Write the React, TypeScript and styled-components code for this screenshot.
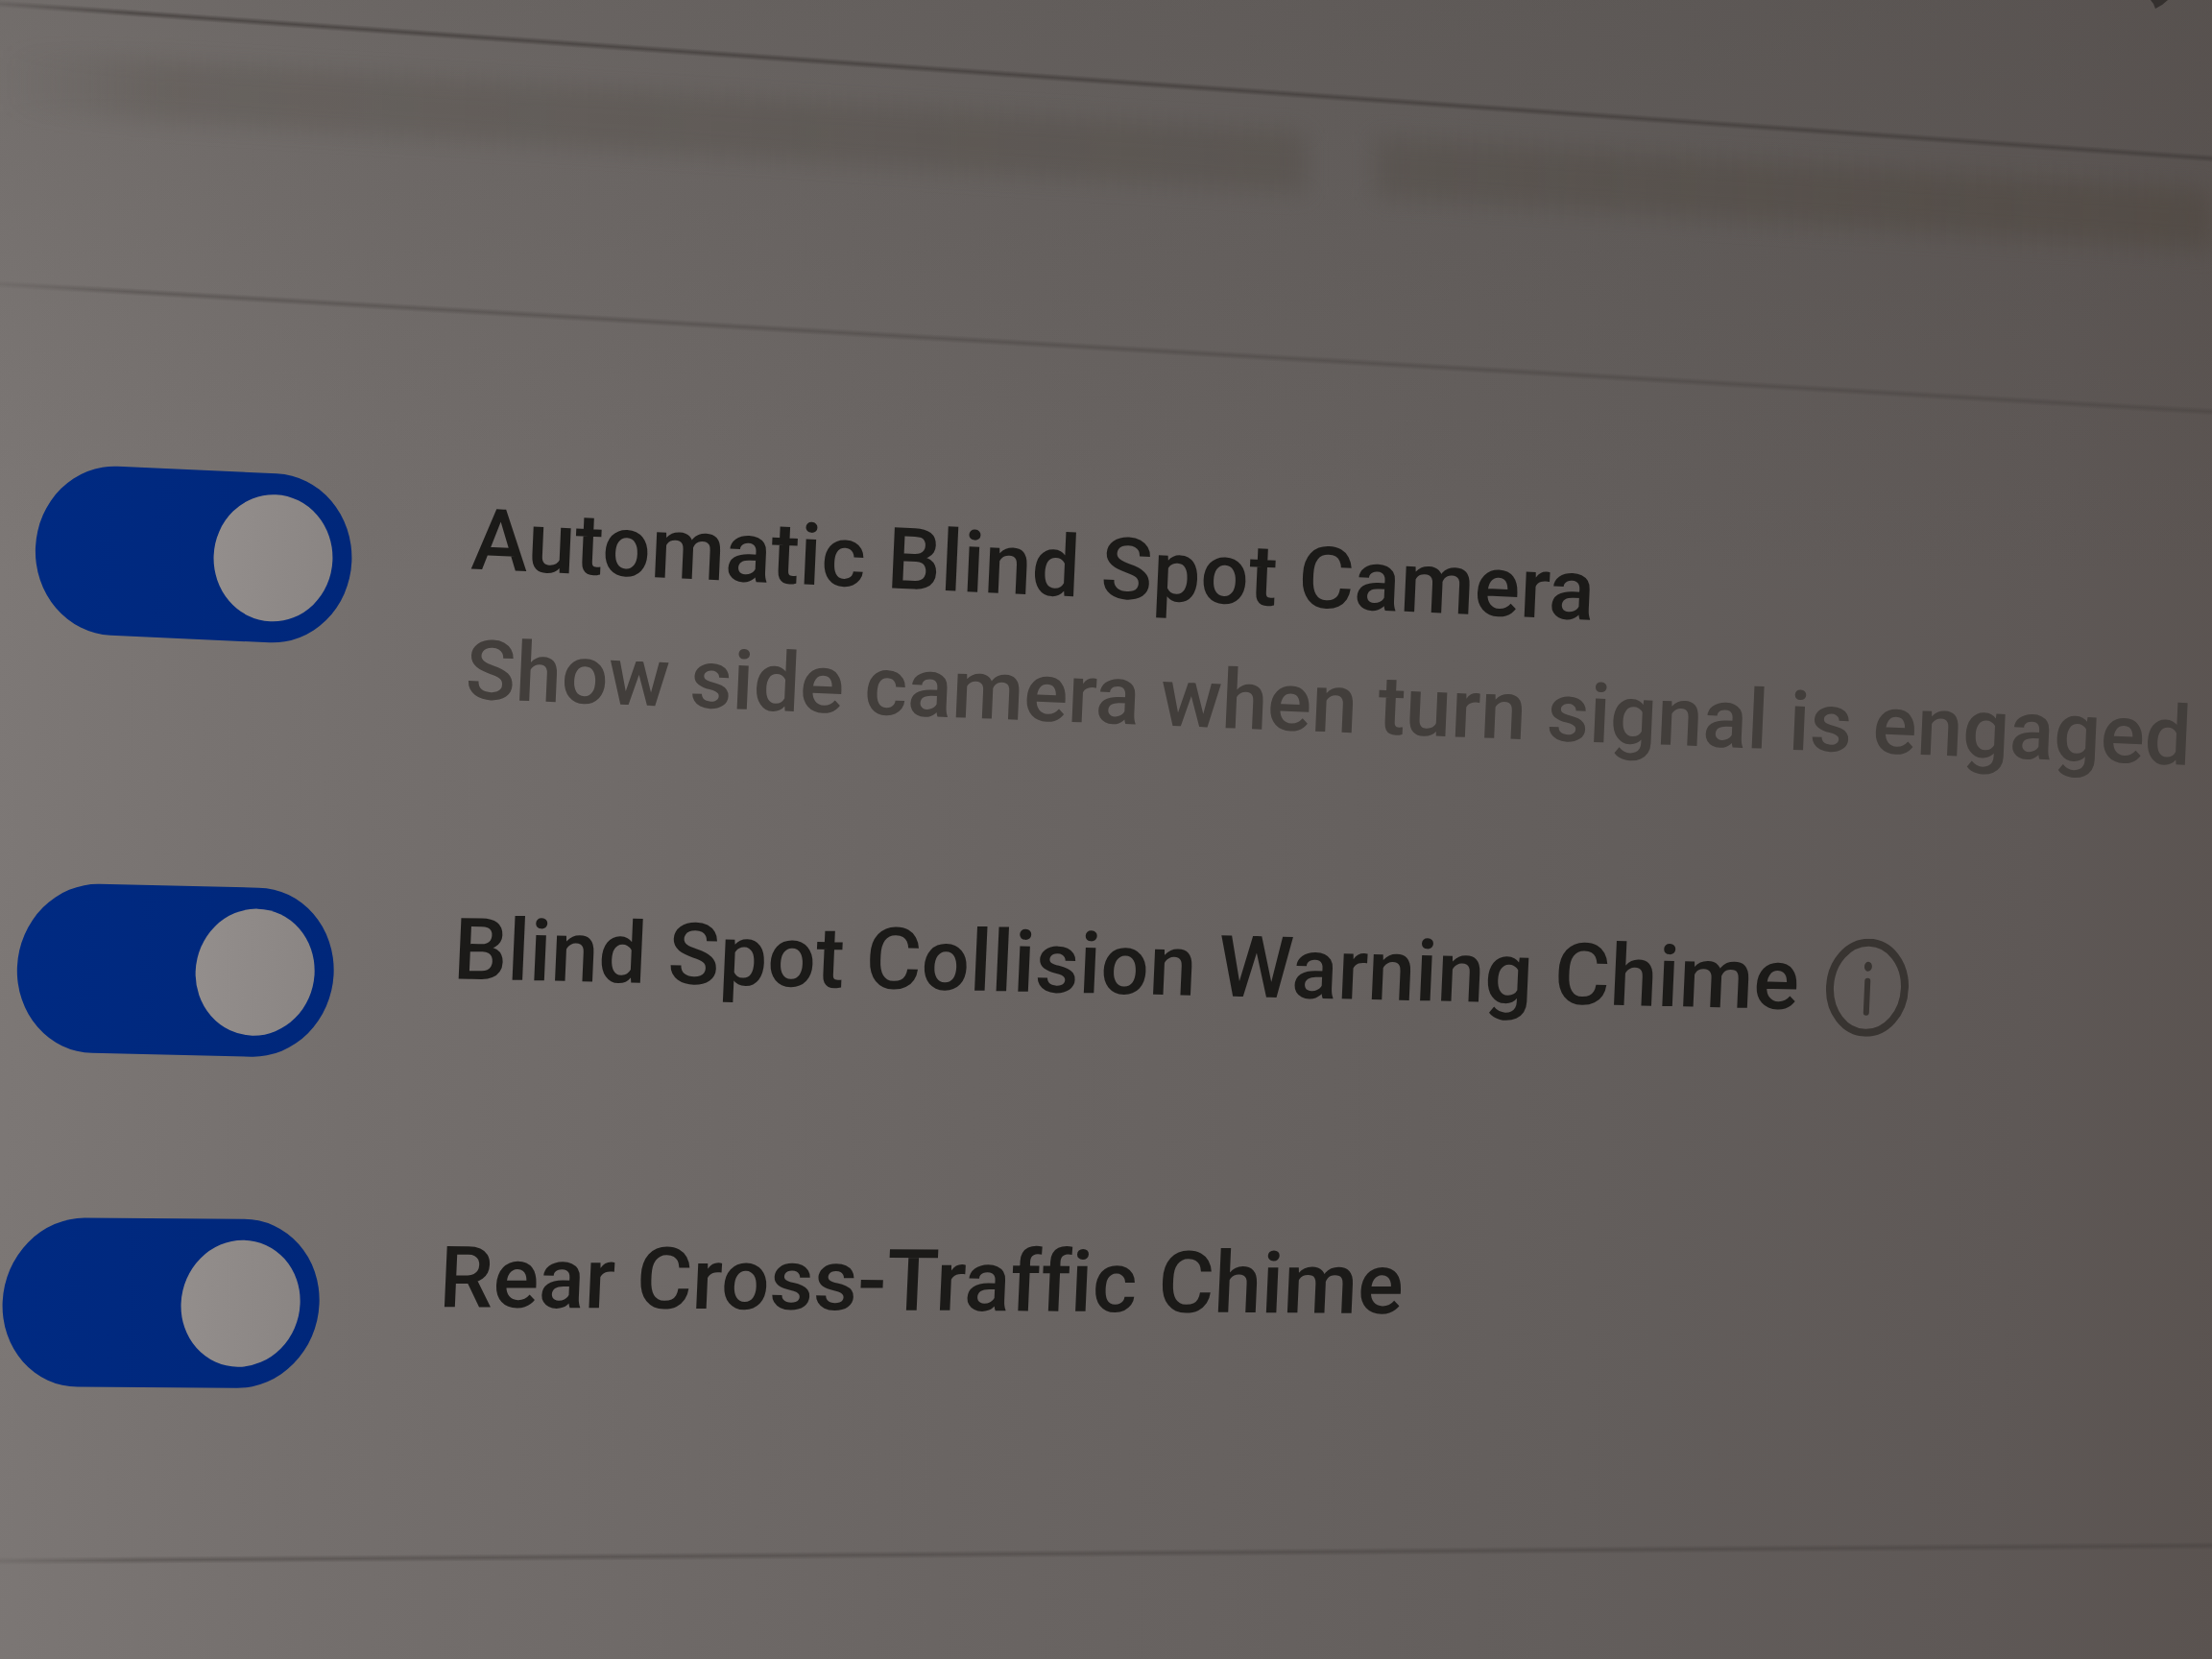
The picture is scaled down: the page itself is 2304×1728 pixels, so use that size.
import React, { useState } from "react";
import styled, { createGlobalStyle } from "styled-components";

const GlobalStyle = createGlobalStyle`
  *, *::before, *::after { box-sizing: border-box; }
  html { background: #625d5b; }
  body {
    margin: 0;
    font-family: Roboto, "Liberation Sans", sans-serif;
    font-variant-ligatures: none;
    color: #1b1a18;
  }
`;

const Screen = styled.main`
  position: relative;
  display: flex;
  flex-direction: column;
  min-height: 100vh;
  overflow: hidden;
  background:
    linear-gradient(180deg, rgba(70, 66, 63, 0.22) 0%, rgba(70, 66, 63, 0) 35%),
    linear-gradient(94deg, #7e7977 0%, #746f6d 18%, #6a6563 45%, #635e5c 72%, #5e5856 90%, #5a5350 100%);
`;

const EdgeMark = styled.svg`
  position: absolute;
  top: 0;
  right: 44px;
  color: #34302e;
`;

const Divider = styled.hr<{ $tilt: number; $strength: number }>`
  width: 100%;
  height: 8px;
  margin: 0;
  border: 0;
  flex: none;
  background: linear-gradient(
    180deg,
    rgba(66, 61, 59, 0),
    rgba(66, 61, 59, ${(p) => p.$strength}) 50%,
    rgba(66, 61, 59, 0)
  );
  mask-image: linear-gradient(90deg, rgba(0, 0, 0, 0.3), #000 6%);
  transform: skewY(${(p) => p.$tilt}deg);
  transform-origin: 0 50%;
`;

const Band = styled.div`
  display: flex;
  gap: 72px;
  height: 64px;
  margin: 44px 0 176px;
  transform: skewY(3.6deg);
  transform-origin: 0 50%;
`;

const BandPart = styled.div<{ $grow: number; $fade?: boolean }>`
  flex: ${(p) => p.$grow} 1 0;
  background: ${(p) =>
    p.$fade
      ? "linear-gradient(90deg, rgba(78, 72, 65, 0), rgba(78, 72, 65, 0.25) 12%, rgba(78, 72, 65, 0.36))"
      : "linear-gradient(90deg, rgba(78, 72, 65, 0.36), rgba(78, 70, 62, 0.55))"};
  filter: blur(12px);
`;

const Settings = styled.ul`
  display: flex;
  flex-direction: column;
  gap: 165px;
  margin: 174px 0 178px;
  padding: 0 0 0 20px;
  list-style: none;
  transform: skewX(-2.5deg);
`;

const Setting = styled.li<{ $tilt: number }>`
  display: flex;
  align-items: flex-start;
  gap: 124px;
  transform: skewY(${(p) => p.$tilt}deg);
  transform-origin: 0 50%;
`;

const Toggle = styled.input`
  appearance: none;
  flex: none;
  width: 330px;
  height: 176px;
  margin: 8px 0 0;
  border-radius: 82px / 88px;
  background: #4d4947;
  cursor: pointer;

  &::before {
    content: "";
    display: block;
    width: 124px;
    height: 132px;
    margin: 22px auto 22px 20px;
    border-radius: 50%;
    background: linear-gradient(90deg, #938e8c, #8a8583);
  }

  &:checked {
    background: linear-gradient(90deg, #002a82, #00277a);
  }

  &:checked::before {
    margin: 22px 20px 22px auto;
  }
`;

const Words = styled.div`
  display: flex;
  flex-direction: column;
`;

const TitleLine = styled.div`
  display: flex;
  align-items: center;
  gap: 28px;
`;

const Title = styled.label`
  font-size: 89px;
  line-height: 136px;
  font-weight: 500;
  white-space: nowrap;
  cursor: pointer;
`;

const Caption = styled.p`
  margin: 0;
  font-size: 86px;
  line-height: 136px;
  font-weight: 500;
  color: #423e3b;
  white-space: nowrap;
  transform: skewY(-0.4deg);
  transform-origin: 0 50%;
`;

const InfoButton = styled.button`
  display: flex;
  padding: 12px 0 0;
  border: 0;
  background: none;
  color: #383431;
  cursor: pointer;
`;

const InfoIcon = () => (
  <svg width="86" height="102" viewBox="0 0 86 102" fill="none" stroke="currentColor" aria-hidden="true">
    <ellipse cx="43" cy="51" rx="39" ry="47" strokeWidth="8" />
    <path d="M43 44V77" strokeWidth="6" strokeLinecap="round" />
    <ellipse cx="43" cy="29" rx="4" ry="5" fill="currentColor" stroke="none" />
  </svg>
);

type Item = { id: string; title: string; caption?: string; info?: boolean; tilt: number };

const items: Item[] = [
  {
    id: "blind-spot-camera",
    title: "Automatic Blind Spot Camera",
    caption: "Show side camera when turn signal is engaged",
    tilt: 2.6,
  },
  { id: "collision-chime", title: "Blind Spot Collision Warning Chime", info: true, tilt: 1.3 },
  { id: "cross-traffic-chime", title: "Rear Cross-Traffic Chime", tilt: 0.4 },
];

export default function App() {
  const [on, setOn] = useState<Record<string, boolean>>({
    "blind-spot-camera": true,
    "collision-chime": true,
    "cross-traffic-chime": true,
  });

  return (
    <>
      <GlobalStyle />
      <Screen>
        <EdgeMark width="22" height="10" viewBox="0 0 22 10" aria-hidden="true">
          <path d="M2 0H20Q14 6 7 9Q6 4 2 0Z" fill="currentColor" />
        </EdgeMark>
        <Divider $tilt={4} $strength={0.75} />
        <Band>
          <BandPart $grow={1360} $fade />
          <BandPart $grow={872} />
        </Band>
        <Divider $tilt={3.3} $strength={0.4} />
        <Settings>
          {items.map((item) => (
            <Setting key={item.id} $tilt={item.tilt}>
              <Toggle
                type="checkbox"
                role="switch"
                id={item.id}
                checked={on[item.id]}
                onChange={(e) => setOn({ ...on, [item.id]: e.target.checked })}
              />
              <Words>
                <TitleLine>
                  <Title htmlFor={item.id}>{item.title}</Title>
                  {item.info && (
                    <InfoButton type="button" aria-label="More information">
                      <InfoIcon />
                    </InfoButton>
                  )}
                </TitleLine>
                {item.caption && <Caption>{item.caption}</Caption>}
              </Words>
            </Setting>
          ))}
        </Settings>
        <Divider $tilt={-0.4} $strength={0.45} />
      </Screen>
    </>
  );
}
